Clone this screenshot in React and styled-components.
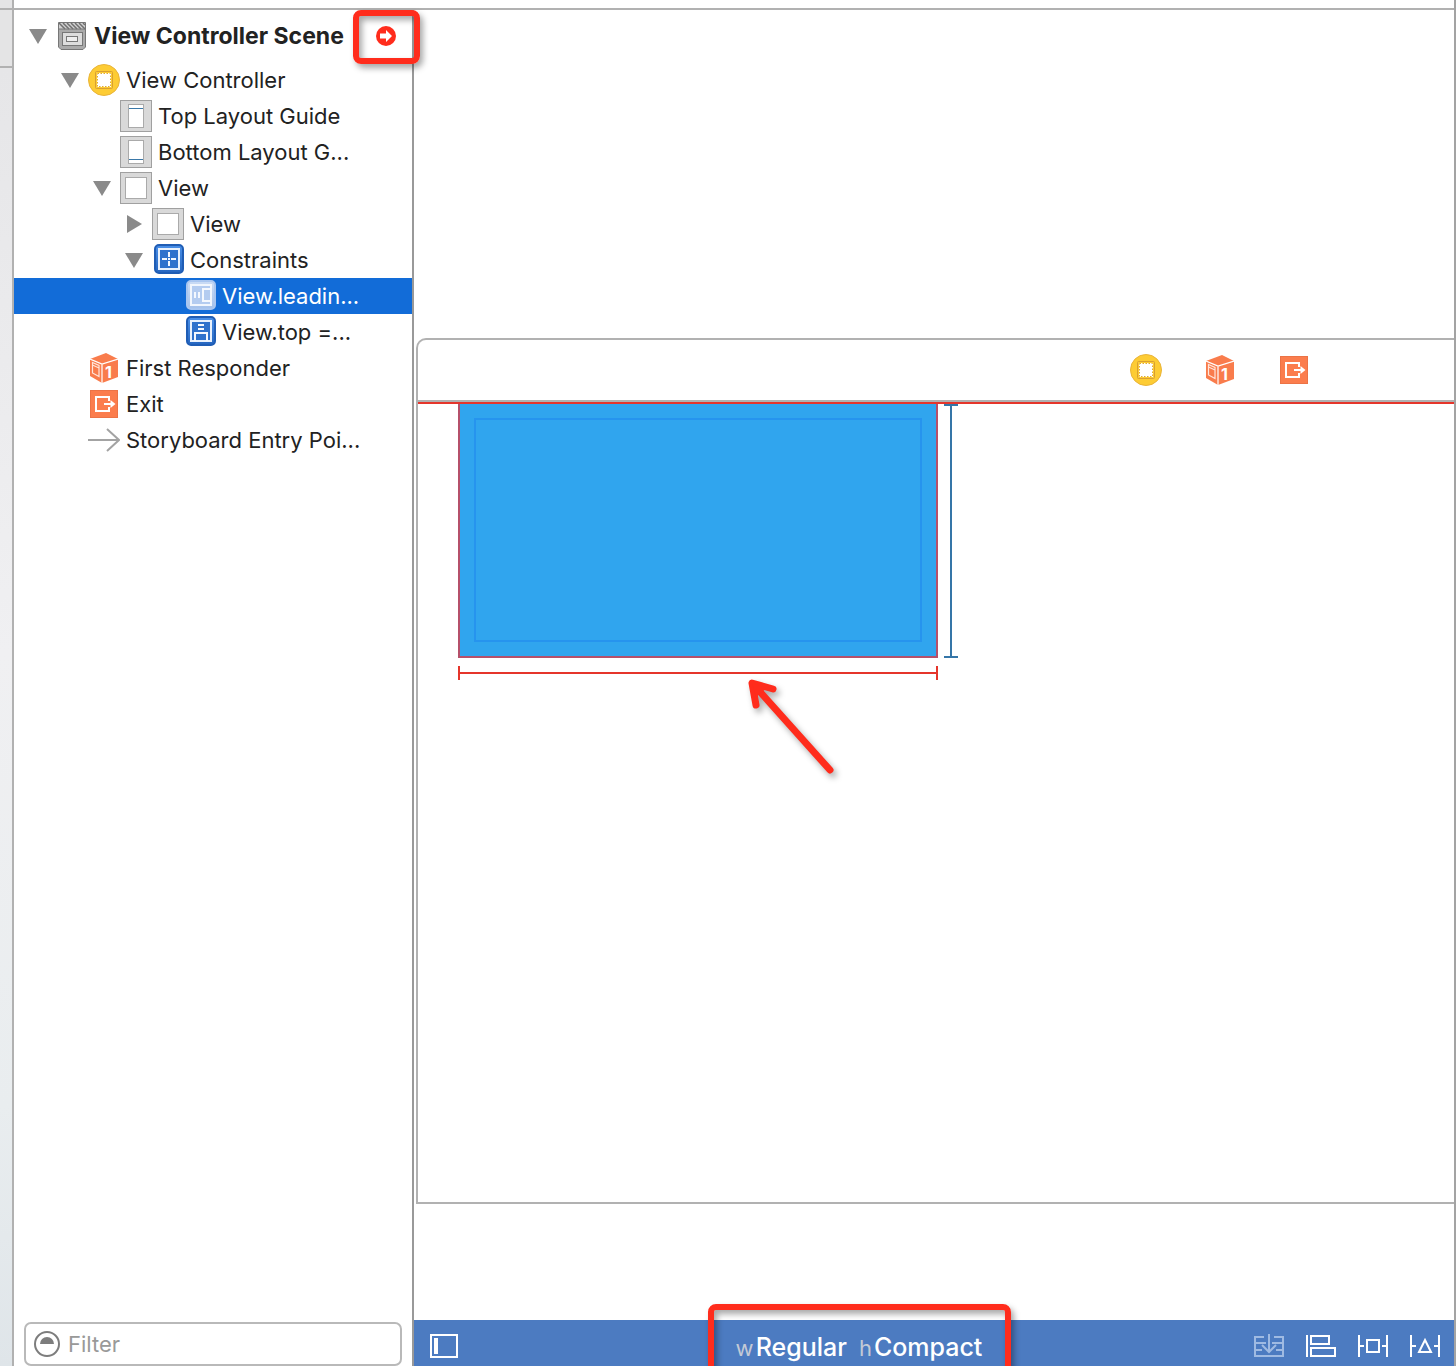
import React from "react";
import styled, { createGlobalStyle, css } from "styled-components";

const GlobalStyle = createGlobalStyle`
  *, *::before, *::after { box-sizing: border-box; }
  html, body { margin: 0; padding: 0; }
  body {
    background: #fff;
    color: #222;
    font-family: Inter, "Liberation Sans", sans-serif;
    font-size: 22px;
    line-height: 28px;
    overflow: hidden;
  }
  button, input { font: inherit; color: inherit; }
  svg { display: block; flex: none; }
`;

const red = "#ff2c1c";

const Window = styled.div`
  display: flex;
  height: 100vh;
  border-right: 2px solid #a3a3a3;
`;

const Gutter = styled.div`
  flex: none;
  display: flex;
  flex-direction: column;
  width: 14px;
  border-right: 2px solid #b1b1b1;
  background: #e4e4e5;
`;

const GutterTop = styled.div`
  height: 10px;
  border-bottom: 2px solid #b1b1b1;
`;

const GutterTabs = styled.div`
  height: 58px;
  border-bottom: 2px solid #b1b1b1;
`;

const GutterBody = styled.div`
  flex: 1;
  background: linear-gradient(#e6e6e8, #f0f0f2 45%, #e9edef 80%, #dfe5e9);
`;

const Workspace = styled.div`
  flex: 1;
  min-width: 0;
  display: flex;
  flex-direction: column;
`;

const JumpBar = styled.div`
  flex: none;
  height: 10px;
  border-bottom: 2px solid #b1b1b1;
`;

const Panes = styled.div`
  flex: 1;
  min-height: 0;
  display: flex;
`;

const Outline = styled.aside`
  flex: none;
  display: flex;
  flex-direction: column;
  width: 400px;
  border-right: 2px solid #999;
`;

const Tree = styled.ul`
  flex: 1;
  margin: 0;
  padding: 0;
  list-style: none;
`;

const Row = styled.li`
  position: relative;
  display: flex;
  align-items: center;
  height: ${(p) => (p.$header ? 52 : 36)}px;
  padding-left: ${(p) => 14 + p.$level * 32}px;
  white-space: nowrap;
  ${(p) => p.$header && css`
    font-size: 23px;
    font-weight: 700;
  `}
  ${(p) => p.$selected && css`
    background: #126cd8;
    color: #fff;
  `}
`;

const Disclosure = styled.button`
  flex: none;
  display: grid;
  place-items: center;
  width: 20px;
  height: 20px;
  margin-right: 8px;
  padding: 0;
  border: 0;
  background: none;
`;

const DisclosureGap = styled.span`
  flex: none;
  width: 28px;
`;

const IconSlot = styled.span`
  flex: none;
  display: grid;
  place-items: center;
  width: 32px;
  height: 32px;
  margin-right: 6px;
`;

const Issue = styled.button`
  display: grid;
  place-items: center;
  margin-left: auto;
  margin-right: 16px;
  padding: 0;
  border: 0;
  background: none;
`;

const Callout = styled.span`
  position: absolute;
  pointer-events: none;
  border: 6px solid ${red};
  border-radius: 8px;
  box-shadow: 3px 4px 6px rgba(0, 0, 0, 0.35), inset 3px 4px 6px rgba(0, 0, 0, 0.35);
`;

const IssueCallout = styled(Callout)`
  top: 0;
  right: -8px;
  width: 67px;
  height: 54px;
`;

const FilterBox = styled.label`
  flex: none;
  display: flex;
  align-items: center;
  gap: 8px;
  height: 44px;
  margin: 0 10px;
  padding: 0 8px;
  border: 2px solid #b9b9b9;
  border-radius: 7px;
`;

const FilterInput = styled.input`
  flex: 1;
  min-width: 0;
  padding: 0;
  border: 0;
  outline: 0;
  background: none;
  &::placeholder { color: #999; opacity: 1; }
`;

const Editor = styled.main`
  flex: 1;
  min-width: 0;
  display: flex;
  flex-direction: column;
`;

const Canvas = styled.div`
  flex: 1;
  display: flex;
  flex-direction: column;
  padding: 328px 0 116px 2px;
`;

const Scene = styled.section`
  flex: 1;
  border: 2px solid #b1b1b1;
  border-right: 0;
  border-top-left-radius: 10px;
`;

const SceneDock = styled.header`
  display: flex;
  align-items: center;
  justify-content: flex-end;
  gap: 42px;
  height: 62px;
  padding-right: 144px;
  border-bottom: 2px solid #b1b1b1;
`;

const DockItem = styled.button`
  display: grid;
  place-items: center;
  width: 32px;
  height: 32px;
  padding: 0;
  border: 0;
  background: none;
`;

const Stage = styled.div`
  position: relative;
  display: grid;
  grid-template-columns: 480px 14px;
  grid-template-rows: 254px 14px;
  column-gap: 6px;
  row-gap: 8px;
  padding-left: 40px;
  border-top: 2px solid #e5352b;
`;

const BlueView = styled.div`
  padding: 14px;
  border: 2px solid #b5506a;
  border-top: 0;
  background: #30a5ee;
`;

const Margins = styled.div`
  height: 100%;
  border: 2px solid #2694ee;
`;

const HeightRule = styled.div`
  border: solid #3576a8;
  border-width: 2px 0;
  background: linear-gradient(#3576a8, #3576a8) center / 2px 100% no-repeat;
`;

const WidthRule = styled.div`
  border: solid #e5352b;
  border-width: 0 2px;
  background: linear-gradient(#e5352b, #e5352b) center / 100% 2px no-repeat;
`;

const Pointer = styled.svg`
  position: absolute;
  left: 320px;
  top: 268px;
  overflow: visible;
  filter: drop-shadow(3px 4px 3px rgba(0, 0, 0, 0.35));
`;

const BottomBar = styled.footer`
  flex: none;
  display: flex;
  align-items: center;
  justify-content: space-between;
  height: 46px;
  padding: 6px 14px 0 16px;
  background: #4c7bc1;
  color: #fff;
`;

const BarButton = styled.button`
  display: flex;
  width: ${(p) => p.$width}px;
  padding: 0;
  border: 0;
  background: none;
`;

const BarGroup = styled.div`
  display: flex;
  gap: 22px;
`;

const SizeClass = styled.button`
  position: relative;
  display: flex;
  align-items: baseline;
  justify-content: center;
  width: 303px;
  padding: 2px 0 0;
  border: 0;
  background: none;
  font-size: 25px;
  font-weight: 500;
  white-space: nowrap;
`;

const Axis = styled.span`
  color: #c3cad6;
  font-size: 22px;
  font-weight: 400;
  margin-left: ${(p) => (p.$spaced ? 12 : 0)}px;
  margin-right: 2px;
`;

const SizeCallout = styled(Callout)`
  inset: -27px 0 -40px;
`;

const Triangle = ({ open }) => (
  <svg width="18" height="18" viewBox="0 0 18 18" fill="#8a8a8a">
    <path d={open ? "M0 2H18L9 17Z" : "M2 0L17 9L2 18Z"} />
  </svg>
);

const SceneIcon = () => (
  <svg width="28" height="28" viewBox="0 0 28 28">
    <path d="M.5 .5H27.500V25L25 27.500H3L.5 25Z" fill="#aaa" stroke="#777" />
    <rect x="1" y="1" width="26" height="6" fill="#d2d2d2" />
    <path d="M1 1L7 7M5 1L11 7M9 1L15 7M13 1L19 7M17 1L23 7M21 1L27 7M25 1L27 3" stroke="#707070" strokeWidth="1.500" />
    <path d="M0 7H28" stroke="#777" />
    <rect x="4.500" y="10.500" width="20" height="13" fill="#ddd" stroke="#777" />
    <rect x="8.500" y="14.500" width="11" height="5" fill="#eee" stroke="#777" />
  </svg>
);

const ControllerIcon = () => (
  <svg width="32" height="32" viewBox="0 0 32 32">
    <circle cx="16" cy="16" r="15.500" fill="#fdcc34" stroke="#e9b43a" />
    <rect x="7.500" y="7.500" width="17" height="17" rx="1" fill="#fdcc34" stroke="#d9a032" />
    <rect x="9.500" y="9.500" width="13" height="13" fill="#fff" stroke="#fff" />
    <rect x="9.500" y="9.500" width="13" height="13" fill="none" stroke="#e0ab35" strokeDasharray="1.500 1.500" />
  </svg>
);

const GuideIcon = ({ lineY }) => (
  <svg width="32" height="32" viewBox="0 0 32 32">
    <rect x=".5" y=".5" width="31" height="31" fill="#d9d9d9" stroke="#a0a0a0" />
    <rect x="8.500" y="4.500" width="15" height="23" fill="#fff" stroke="#aaa" />
    <path d={`M9 ${lineY}H23`} stroke="#3a78a8" />
  </svg>
);

const ViewIcon = () => (
  <svg width="32" height="32" viewBox="0 0 32 32">
    <rect x=".5" y=".5" width="31" height="31" fill="#d9d9d9" stroke="#a0a0a0" />
    <rect x="5.500" y="5.500" width="21" height="21" fill="#fff" stroke="#aaa" />
  </svg>
);

const ConstraintTile = ({ id, light, children }) => (
  <svg width="32" height="32" viewBox="-2 0 32 32">
    <defs>
      <linearGradient id={id} x1="0" y1="0" x2="0" y2="1">
        <stop offset="0" stopColor={light ? "#cbdcf5" : "#4a90e8"} />
        <stop offset="1" stopColor={light ? "#a3c0ea" : "#2566c0"} />
      </linearGradient>
    </defs>
    <rect x="1" y="1" width="28" height="28" rx="4" fill={`url(#${id})`} stroke={light ? "#a9c6f0" : "#1f5db5"} strokeWidth="2" />
    <rect x="5" y="5" width="20" height="20" fill={light ? "#b4ccf0" : "#2f72cc"} stroke={light ? "#f1f6fd" : "#e8f1fd"} strokeWidth="2" />
    <g fill="none" stroke="#f4f8fe" strokeWidth="2">{children}</g>
  </svg>
);

const ConstraintsIcon = () => (
  <ConstraintTile id="tile-all">
    <path d="M15 8V13M15 14V16M15 17V22M8 15H13M17 15H22" />
  </ConstraintTile>
);

const LeadingIcon = () => (
  <ConstraintTile id="tile-leading" light>
    <path d="M9 12V18M13 12V18M25 9H17V21H25" />
  </ConstraintTile>
);

const TopIcon = () => (
  <ConstraintTile id="tile-top">
    <path d="M12 9H18M12 13H18M9 25V17H21V25" />
  </ConstraintTile>
);

const ResponderIcon = () => (
  <svg width="28" height="30" viewBox="0 0 28 30">
    <path d="M16 0L28 6V24L12 30L0 23V6Z" fill="#f97c4c" />
    <path d="M0 6L12 11L28 6M12 11V30" fill="none" stroke="#fff" strokeWidth="1.200" />
    <path d="M2.500 9.500L9 12.500V23.500L2.500 20ZM2.500 12L9 15" fill="none" stroke="#ffe5da" strokeWidth="1.200" />
    <text x="15" y="25" fill="#fff" fontSize="16" fontWeight="700">1</text>
  </svg>
);

const ExitIcon = () => (
  <svg width="28" height="28" viewBox="0 0 28 28">
    <rect x=".5" y=".5" width="27" height="27" fill="#fb7d4d" stroke="#ec7346" />
    <path d="M19 11V7H6V21H19V17M14 14H22" fill="none" stroke="#fff" strokeWidth="2" />
    <path d="M20.500 10L25.500 14L20.500 18Z" fill="#fff" />
  </svg>
);

const EntryIcon = () => (
  <svg width="32" height="32" viewBox="0 0 32 32" fill="none" stroke="#a3a3a3" strokeWidth="2">
    <path d="M0 16H31M19 5L31 16L19 27" />
  </svg>
);

const IssueIcon = () => (
  <svg width="20" height="20" viewBox="0 0 20 20">
    <circle cx="10" cy="10" r="10" fill={red} />
    <path d="M4 7.500H10V4L16 10L10 16V12.500H4Z" fill="#fff" />
  </svg>
);

const FilterIcon = () => (
  <svg width="26" height="26" viewBox="0 0 26 26">
    <circle cx="13" cy="13" r="12" fill="none" stroke="#7d7d7d" strokeWidth="2" />
    <path d="M6 13A7 7 0 0 1 20 13Z" fill="#7d7d7d" />
  </svg>
);

const BarIcon = ({ children, faded, width = 30 }) => (
  <svg width={width} height="24" viewBox={`0 0 ${width} 24`} fill="none" stroke={faded ? "#9fbae2" : "#fff"} strokeWidth="2">
    {children}
  </svg>
);

const rows = [
  { label: "View Controller Scene", level: 0, open: true, header: true, icon: <SceneIcon /> },
  { label: "View Controller", level: 1, open: true, icon: <ControllerIcon /> },
  { label: "Top Layout Guide", level: 2, icon: <GuideIcon lineY={8.5} /> },
  { label: "Bottom Layout G...", level: 2, icon: <GuideIcon lineY={23.5} /> },
  { label: "View", level: 2, open: true, icon: <ViewIcon /> },
  { label: "View", level: 3, open: false, icon: <ViewIcon /> },
  { label: "Constraints", level: 3, open: true, icon: <ConstraintsIcon /> },
  { label: "View.leadin...", level: 4, selected: true, icon: <LeadingIcon /> },
  { label: "View.top =...", level: 4, icon: <TopIcon /> },
  { label: "First Responder", level: 1, icon: <ResponderIcon /> },
  { label: "Exit", level: 1, icon: <ExitIcon /> },
  { label: "Storyboard Entry Poi...", level: 1, icon: <EntryIcon /> },
];

function TreeRow({ row }) {
  return (
    <Row $level={row.level} $header={row.header} $selected={row.selected}>
      {row.open === undefined ? (
        <DisclosureGap />
      ) : (
        <Disclosure type="button" aria-label={`Toggle ${row.label}`} aria-expanded={row.open}>
          <Triangle open={row.open} />
        </Disclosure>
      )}
      <IconSlot>{row.icon}</IconSlot>
      <span>{row.label}</span>
      {row.header && (
        <>
          <Issue type="button" aria-label="Show layout issues">
            <IssueIcon />
          </Issue>
          <IssueCallout />
        </>
      )}
    </Row>
  );
}

export default function App() {
  return (
    <>
      <GlobalStyle />
      <Window>
        <Gutter>
          <GutterTop />
          <GutterTabs />
          <GutterBody />
        </Gutter>
        <Workspace>
          <JumpBar />
          <Panes>
            <Outline>
              <Tree>
                {rows.map((row, i) => (
                  <TreeRow key={i} row={row} />
                ))}
              </Tree>
              <FilterBox>
                <FilterIcon />
                <FilterInput type="text" placeholder="Filter" aria-label="Filter" />
              </FilterBox>
            </Outline>
            <Editor>
              <Canvas>
                <Scene>
                  <SceneDock>
                    <DockItem type="button" aria-label="View Controller"><ControllerIcon /></DockItem>
                    <DockItem type="button" aria-label="First Responder"><ResponderIcon /></DockItem>
                    <DockItem type="button" aria-label="Exit"><ExitIcon /></DockItem>
                  </SceneDock>
                  <Stage>
                    <BlueView><Margins /></BlueView>
                    <HeightRule />
                    <WidthRule />
                    <Pointer width="110" height="110" viewBox="0 0 110 110" fill="none" stroke={red} strokeWidth="7" strokeLinecap="round" strokeLinejoin="round">
                      <path d="M92 98L15 12M35 17L14 11L18 33" />
                      <path d="M14 11L29 16L18 25Z" fill={red} stroke="none" />
                    </Pointer>
                  </Stage>
                </Scene>
              </Canvas>
              <BottomBar>
                <BarButton type="button" $width={34} aria-label="Toggle document outline">
                  <BarIcon width={28}>
                    <rect x="1" y="1" width="26" height="22" />
                    <path d="M6 4V20" strokeWidth="4" />
                  </BarIcon>
                </BarButton>
                <SizeClass type="button">
                  <Axis>w</Axis>Regular<Axis $spaced>h</Axis>Compact
                  <SizeCallout />
                </SizeClass>
                <BarGroup>
                  <BarButton type="button" $width={30} aria-label="Embed in stack">
                    <BarIcon faded>
                      <path d="M10 3H1V22H29V3H20M1 9H12M18 9H29M1 16H8M22 16H29M15 0V18M8 11L15 18L22 11" />
                    </BarIcon>
                  </BarButton>
                  <BarButton type="button" $width={30} aria-label="Align">
                    <BarIcon>
                      <path d="M1 1V23" />
                      <rect x="5" y="2" width="18" height="8" />
                      <rect x="5" y="14" width="24" height="8" />
                    </BarIcon>
                  </BarButton>
                  <BarButton type="button" $width={30} aria-label="Pin">
                    <BarIcon>
                      <path d="M1 1V23M29 1V23M1 12H6M24 12H29" />
                      <rect x="9" y="6" width="12" height="12" />
                    </BarIcon>
                  </BarButton>
                  <BarButton type="button" $width={30} aria-label="Resolve layout issues">
                    <BarIcon>
                      <path d="M1 1V23M29 1V23M1 12H6M24 12H29M15 6L21 18H9Z" />
                    </BarIcon>
                  </BarButton>
                </BarGroup>
              </BottomBar>
            </Editor>
          </Panes>
        </Workspace>
      </Window>
    </>
  );
}
